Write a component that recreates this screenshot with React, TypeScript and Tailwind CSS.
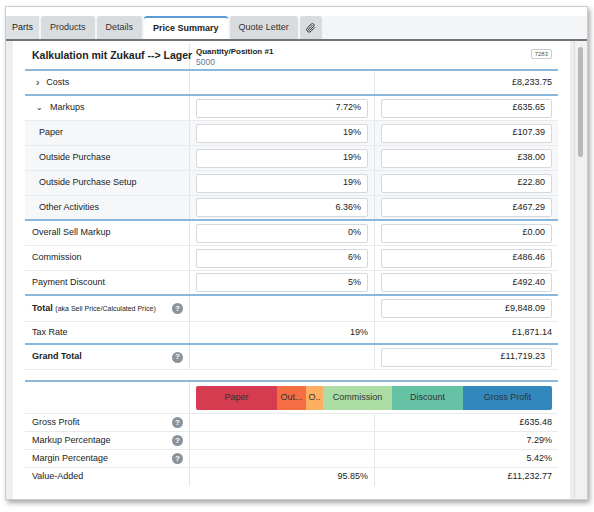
import React from "react";

const Q = () => (
  <span className="inline-flex items-center justify-center w-[11px] h-[11px] rounded-full bg-[#8a939c] text-white text-[8px] font-bold leading-none">?</span>
);

const Inp = ({ v }: { v: string }) => (
  <div className="w-full h-[19px] border border-[#d5d8dc] rounded-[2px] bg-white flex items-center justify-end px-[6px]">{v}</div>
);

type R = { l: React.ReactNode; a?: React.ReactNode; b?: React.ReactNode; h?: number; sub?: boolean; blue?: boolean };

const Row = ({ l, a, b, h = 25, sub, blue }: R) => (
  <div className={`flex ${sub ? "bg-[#f6f7f8]" : "bg-white"} border-b ${blue ? "border-[#8ab8dc] border-b-2" : "border-[#e8eaec]"}`} style={{ height: h }}>
    <div className={`w-[165px] flex items-center ${sub ? "pl-[14px]" : "pl-[7px]"} pr-[6px] border-r border-[#e3e6e9]`}>{l}</div>
    <div className="w-[185px] flex items-center px-[6px] justify-end border-r border-[#e3e6e9]">{a}</div>
    <div className="flex-1 flex items-center px-[6px] justify-end">{b}</div>
  </div>
);

export default function App() {
  const tabs = ["Parts", "Products", "Details", "Price Summary", "Quote Letter"];
  return (
    <div className="w-[594px] h-[512px] bg-white p-[5px] pt-[6px] text-[9px] text-[#222]" style={{ fontFamily: '"Liberation Sans", Arial, sans-serif' }}>
      <div className="w-[583px] h-[494px] border border-[#c9ccd0] shadow-[2px_3px_5px_rgba(0,0,0,0.35)] bg-[#eceef0] flex flex-col">
        <div className="h-[9px] bg-white" />
        <div className="h-[25px] bg-[#f4f5f6] flex items-end gap-[2px] border-b-2 border-[#6f7377]">
          {tabs.map((t, i) => (
            <div key={t} className={`h-[23px] flex items-center ${i === 0 ? "px-[6px] bg-[#dde0e3]" : "rounded-t-[3px] px-[9px]"} ${t === "Price Summary" ? "bg-white font-bold border-t-2 border-[#5b9bd5]" : i === 0 ? "" : "bg-[#d9dcdf] text-[#333]"}`}>{t}</div>
          ))}
          <div className="h-[23px] w-[22px] bg-[#d9dcdf] rounded-t-[3px] flex items-center justify-center">
            <svg width="10" height="10" viewBox="0 0 24 24" fill="none" stroke="#333" strokeWidth="2.4" strokeLinecap="round"><path d="M21 11l-9 9a6 6 0 0 1-8.5-8.5l9-9a4 4 0 0 1 5.7 5.7l-9 9a2 2 0 0 1-2.8-2.8l8.3-8.3" /></svg>
          </div>
        </div>
        <div className="flex-1 flex pl-[7px] min-h-0">
          <div className="w-[557px] bg-white px-[12px] pt-[2px] overflow-hidden">
            <div className="flex border-b-2 border-[#8ab8dc]" style={{ height: 28 }}>
              <div className="w-[165px] flex items-center pl-[7px] text-[10.5px] font-bold whitespace-nowrap border-r border-[#e3e6e9]">Kalkulation mit Zukauf --&gt; Lager</div>
              <div className="flex-1 flex justify-between px-[6px] pt-[4px]">
                <div className="leading-[10px]"><div className="font-bold text-[8px]">Quantity/Position #1</div><div className="text-[#5b7a99] text-[8.5px]">5000</div></div>
                <div className="h-[10px] px-[3px] border border-[#ccc] rounded-[2px] text-[6px] leading-[9px] text-[#555] mt-[2px]">7283</div>
              </div>
            </div>
            <Row blue l={<span className="flex items-center gap-[7px]"><span className="text-[10px] pl-[4px]">›</span>Costs</span>} b="£8,233.75" />
            <Row l={<span className="flex items-center gap-[7px]"><span className="text-[8px] pl-[4px]">⌄</span>Markups</span>} a={<Inp v="7.72%" />} b={<Inp v="£635.65" />} />
            <Row sub l="Paper" a={<Inp v="19%" />} b={<Inp v="£107.39" />} />
            <Row sub l="Outside Purchase" a={<Inp v="19%" />} b={<Inp v="£38.00" />} />
            <Row sub l="Outside Purchase Setup" a={<Inp v="19%" />} b={<Inp v="£22.80" />} />
            <Row sub blue l="Other Activities" a={<Inp v="6.36%" />} b={<Inp v="£467.29" />} />
            <Row l="Overall Sell Markup" a={<Inp v="0%" />} b={<Inp v="£0.00" />} />
            <Row l="Commission" a={<Inp v="6%" />} b={<Inp v="£486.46" />} />
            <Row blue l="Payment Discount" a={<Inp v="5%" />} b={<Inp v="£492.40" />} />
            <Row h={26} l={<span className="flex w-full justify-between items-center"><span><b>Total</b> <span className="text-[7px]">(aka Sell Price/Calculated Price)</span></span><Q /></span>} b={<Inp v="£9,848.09" />} />
            <Row blue h={23} l="Tax Rate" a="19%" b="£1,871.14" />
            <Row h={25} l={<span className="flex w-full justify-between items-center"><b>Grand Total</b><Q /></span>} b={<Inp v="£11,719.23" />} />
            <div className="h-[12px] border-b-2 border-[#8ab8dc]" />
            <div className="flex h-[32px] border-b border-[#e8eaec]">
              <div className="w-[165px] border-r border-[#e3e6e9]" />
              <div className="flex-1 flex items-center px-[6px]">
                <div className="flex w-full h-[24px] rounded-[2px] overflow-hidden text-[#333]">
                  <div className="w-[81px] bg-[#d63c4f] flex items-center justify-center">Paper</div>
                  <div className="w-[29px] bg-[#f46d43] flex items-center justify-center">Out...</div>
                  <div className="w-[17px] bg-[#fdae61] flex items-center justify-center">O..</div>
                  <div className="w-[69px] bg-[#abdda4] flex items-center justify-center">Commission</div>
                  <div className="w-[71px] bg-[#66c2a5] flex items-center justify-center">Discount</div>
                  <div className="flex-1 bg-[#3288bd] flex items-center justify-center">Gross Profit</div>
                </div>
              </div>
            </div>
            <Row h={18} l={<span className="flex w-full justify-between items-center">Gross Profit<Q /></span>} b="£635.48" />
            <Row h={18} l={<span className="flex w-full justify-between items-center">Markup Percentage<Q /></span>} b="7.29%" />
            <Row h={18} l={<span className="flex w-full justify-between items-center">Margin Percentage<Q /></span>} b="5.42%" />
            <div className="flex h-[18px]">
              <div className="w-[165px] flex items-center pl-[7px] border-r border-[#e3e6e9]">Value-Added</div>
              <div className="w-[185px] flex items-center px-[6px] justify-end border-r border-[#e3e6e9]">95.85%</div>
              <div className="flex-1 flex items-center px-[6px] justify-end">£11,232.77</div>
            </div>
          </div>
          <div className="w-[4px]" />
          <div className="w-[12px] bg-[#f1f1f1] border-l border-[#ddd] relative">
            <div className="absolute left-[3px] top-[6px] w-[5px] h-[110px] rounded bg-[#b8b8b8]" />
          </div>
        </div>
      </div>
    </div>
  );
}
